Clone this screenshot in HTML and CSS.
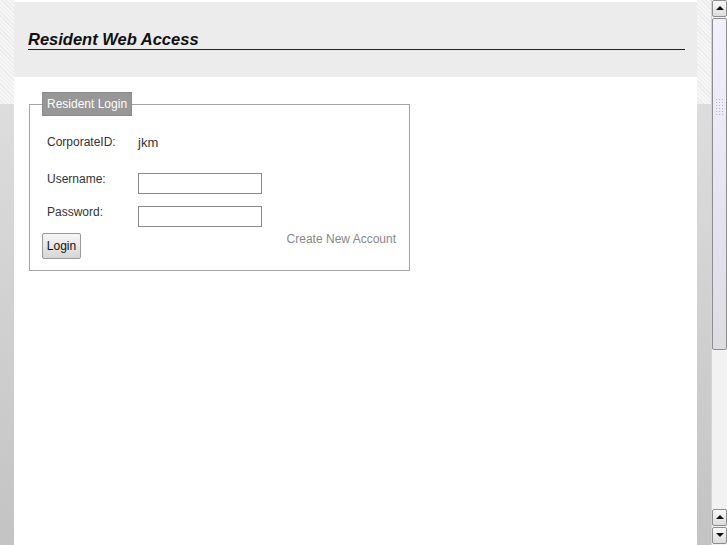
FILE: index.html
```html
<!DOCTYPE html>
<html lang="en">
<head>
    <meta charset="UTF-8">
    <meta name="viewport" content="width=device-width, initial-scale=1.0">
    <title>Resident Web Access</title>
    <link rel="stylesheet" href="styles.css">
</head>
<body>
    <div class="page">
        <div class="sheet">
            <header class="top-header">
                <h1 class="title">Resident Web Access</h1>
            </header>

            <form class="login-form" action="" onsubmit="return false;">
                <fieldset class="login-box">
                    <legend class="login-legend">Resident Login</legend>

                    <div class="row row-corp">
                        <span class="label">CorporateID:</span>
                        <span class="value">jkm</span>
                    </div>
                    <div class="row row-user">
                        <label class="label" for="username">Username:</label>
                        <input class="field" type="text" id="username">
                    </div>
                    <div class="row row-pass">
                        <label class="label" for="password">Password:</label>
                        <input class="field" type="password" id="password">
                    </div>

                    <div class="actions">
                        <button class="btn-login" type="submit">Login</button>
                        <a href="" class="new-account">Create New Account</a>
                    </div>
                </fieldset>
            </form>
        </div>
    </div>

    <!-- fake window scrollbar -->
    <div class="scrollbar">
        <div class="sb-btn sb-up"></div>
        <div class="sb-thumb"><span class="sb-grip"></span></div>
        <div class="sb-track"></div>
        <div class="sb-btn sb-up"></div>
        <div class="sb-btn sb-down"></div>
    </div>
</body>
</html>
```

FILE: styles.css
```css
html, body {
    height: 100%;
}

body {
    display: flex;
    margin: 0;
    overflow: hidden;
    font-family: "Liberation Sans", Arial, sans-serif;
    font-size: 12px;
    color: #222;
}

.page {
    flex: 1;
    padding: 0 14px;
    background:
        repeating-linear-gradient(45deg, #f6f6f6 0 2px, #ebebeb 2px 3px) top / 100% 104px no-repeat,
        linear-gradient(#e3e3e3, #c3c3c3);
}

.sheet {
    height: 100%;
    background-color: #fff;
    padding-top: 2px;
    box-sizing: border-box;
}

.top-header {
    background-color: #ececec;
    padding: 28px 12px 27px 14px;
}

.title {
    margin: 0;
    padding-bottom: 1px;
    border-bottom: 1px solid #222;
    font-size: 16.5px;
    line-height: 18px;
    font-style: italic;
    font-weight: bold;
    color: #111;
}

.login-form {
    margin: 15px 0 0 15px;
}

.login-box {
    width: 381px;
    box-sizing: border-box;
    margin: 0;
    padding: 0 12px 11px 12px;
    border: 1px solid #a3a3a3;
}

.login-legend {
    padding: 5px 4px 4px 4px;
    line-height: 13px;
    background-color: #979797;
    border: 1px solid #8c8c8c;
    color: #fff;
}

.row {
    display: flex;
    align-items: flex-start;
    padding-left: 5px;
}

.label {
    width: 91px;
    line-height: 14px;
    color: #333;
}

.row-corp {
    padding-top: 18px;
    margin-bottom: 23px;
    align-items: center;
    height: 16px;
}

.row-corp .value {
    font-size: 13px;
    color: #333;
}

.row-user {
    margin-bottom: 12px;
}

.row-user .label,
.row-pass .label {
    margin-top: -1px;
}

.field {
    width: 124px;
    height: 21px;
    box-sizing: border-box;
    margin: 0;
    padding: 1px 3px;
    border: 1px solid #8a8a8a;
    background-color: #fff;
    font: inherit;
}

.actions {
    display: flex;
    justify-content: space-between;
    align-items: flex-start;
    margin-top: 6px;
}

.btn-login {
    width: 39px;
    height: 26px;
    padding: 0;
    border: 1px solid #9a9a9a;
    border-radius: 2px;
    background: linear-gradient(#f7f7f7, #d6d6d6);
    font: inherit;
    color: #111;
}

.new-account {
    margin-top: -1px;
    margin-right: 1px;
    line-height: 14px;
    color: #888;
    text-decoration: none;
}

/* scrollbar on the right */
.scrollbar {
    width: 16px;
    display: flex;
    flex-direction: column;
    background-color: #f2f2f2;
    border-left: 1px solid #d4d4d4;
    box-sizing: border-box;
}

.sb-btn {
    position: relative;
    height: 15px;
    margin-bottom: 1px;
    border: 1px solid #8e8e8e;
    border-radius: 2px;
    background: linear-gradient(#fafafa, #dcdcdc);
}

.sb-btn::after {
    content: "";
    position: absolute;
    left: 3px;
    top: 5px;
    border-left: 4px solid transparent;
    border-right: 4px solid transparent;
}

.sb-up::after {
    border-bottom: 4px solid #111;
}

.sb-down::after {
    top: 5px;
    border-top: 4px solid #111;
}

.sb-thumb {
    height: 330px;
    display: flex;
    align-items: center;
    justify-content: center;
    border: 1px solid #8e8e8e;
    border-radius: 2px;
    background: linear-gradient(#f0f1fa, #dcdde3);
}

.sb-grip {
    width: 9px;
    height: 18px;
    margin-top: -155px;
    background: radial-gradient(circle, #b8b8b8 0.8px, transparent 1px) 0 0 / 3px 3px;
}

.sb-track {
    flex: 1;
}
```
